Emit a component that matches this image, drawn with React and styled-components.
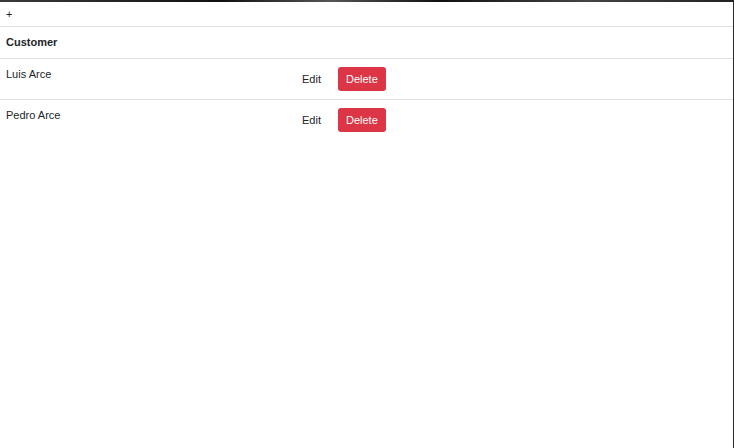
import React from 'react'
import styled, { createGlobalStyle } from 'styled-components'

const GlobalStyle = createGlobalStyle`
  html, body {
    margin: 0;
    padding: 0;
    background: #fff;
  }
  body {
    font-family: "Liberation Sans", Arial, sans-serif;
    font-size: 11px;
    color: #212529;
  }
`

const Frame = styled.div`
  height: 448px;
  box-sizing: border-box;
  border-right: 1px solid #2a2a2a;
  &::before {
    content: '';
    display: block;
    height: 2px;
    background: linear-gradient(90deg, #3a3a3a 0%, #111 30%, #555 45%, #111 60%, #444 80%, #222 100%);
  }
`

const Toolbar = styled.div`
  height: 24px;
  display: flex;
  align-items: center;
  padding: 0 6px;
  border-bottom: 1px solid #dee2e6;
`

const AddBtn = styled.button`
  border: none;
  background: none;
  padding: 0;
  font: inherit;
  font-size: 11px;
  color: #212529;
  cursor: pointer;
`

const Row = styled.div`
  display: grid;
  grid-template-columns: 288px auto;
  align-items: start;
  border-bottom: 1px solid #dee2e6;
  padding: ${p => (p.$head ? '8px 6px 7px' : '8px 6px')};
  min-height: ${p => (p.$head ? '16px' : '24px')};
  &:last-child {
    border-bottom: none;
  }
`

const Cell = styled.div`
  line-height: 15px;
  font-weight: ${p => (p.$bold ? 'bold' : 'normal')};
`

const Actions = styled.div`
  display: flex;
  align-items: center;
  gap: 9px;
`

const Button = styled.button`
  height: 24px;
  padding: 0 8px;
  border: none;
  border-radius: 3px;
  font: inherit;
  font-size: 11px;
  cursor: pointer;
  color: ${p => (p.$danger ? '#fff' : '#212529')};
  background: ${p => (p.$danger ? '#dc3545' : 'transparent')};
`

const customers = [
  { id: 1, name: 'Luis Arce' },
  { id: 2, name: 'Pedro Arce' },
]

export default function App() {
  return (
    <Frame>
      <GlobalStyle />
      <Toolbar>
        <AddBtn>+</AddBtn>
      </Toolbar>
      <Row $head>
        <Cell $bold>Customer</Cell>
      </Row>
      {customers.map(c => (
        <Row key={c.id}>
          <Cell>{c.name}</Cell>
          <Actions>
            <Button>Edit</Button>
            <Button $danger>Delete</Button>
          </Actions>
        </Row>
      ))}
    </Frame>
  )
}
